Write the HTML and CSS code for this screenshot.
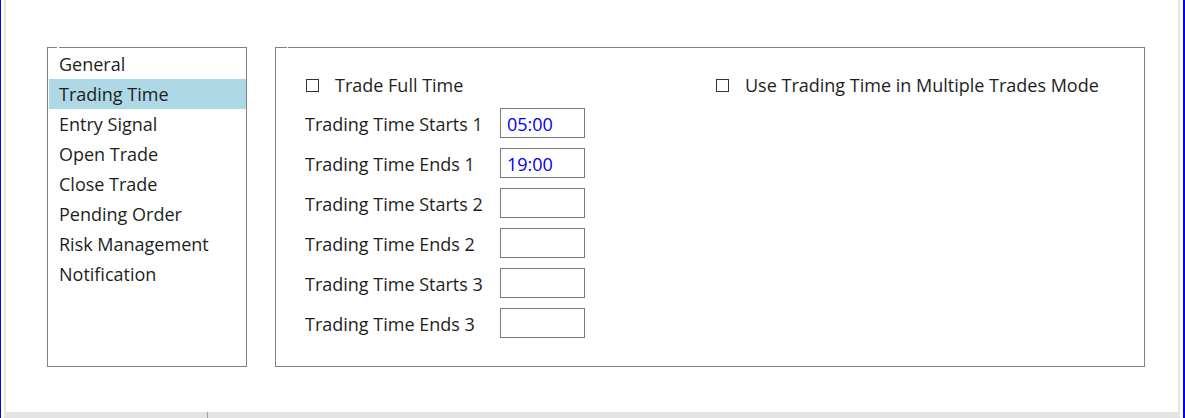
FILE: index.html
```html
<!DOCTYPE html>
<html>
  <head>
    <meta content="text/html; charset=utf-8" http-equiv="content-type">
    <title>Trading Time settings</title>
    <link rel="stylesheet" href="styles.css">
  </head>
  <body>
    <div class="window">
      <div class="client">
        <div class="content">
          <ul class="menu">
            <li>General</li>
            <li class="selected">Trading Time</li>
            <li>Entry Signal</li>
            <li>Open Trade</li>
            <li>Close Trade</li>
            <li>Pending Order</li>
            <li>Risk Management</li>
            <li>Notification</li>
          </ul>
          <form class="panel" name="myform">
            <div class="checkrow">
              <label class="check"><span class="box"></span>Trade Full Time</label>
              <label class="check"><span class="box"></span>Use Trading Time in Multiple Trades Mode</label>
            </div>
            <div class="fields">
              <span class="label">Trading Time Starts 1</span>
              <input class="time" type="text" value="05:00">
              <span class="label">Trading Time Ends 1</span>
              <input class="time" type="text" value="19:00">
              <span class="label">Trading Time Starts 2</span>
              <input class="time" type="text" value="">
              <span class="label">Trading Time Ends 2</span>
              <input class="time" type="text" value="">
              <span class="label">Trading Time Starts 3</span>
              <input class="time" type="text" value="">
              <span class="label">Trading Time Ends 3</span>
              <input class="time" type="text" value="">
            </div>
          </form>
        </div>
        <div class="statusbar">
          <span class="cell"></span>
          <span class="cell last"></span>
        </div>
      </div>
    </div>
  </body>
</html>
```

FILE: styles.css
```css
body {
    margin: 0;
    background-color: white;
    font-family: "Open Sans", Lato, sans-serif;
    font-size: 18px;
    color: #1e1e1e;
}

.window {
    box-sizing: border-box;
    width: 1185px;
    height: 418px;
    border-left: 1px solid #0000ff;
    border-right: 2px solid #0000ff;
    padding: 0 3px;
    display: flex;
}

.client {
    flex: 1;
    display: flex;
    flex-direction: column;
    border-left: 2px solid #e3e3e3;
    border-right: 2px solid #e3e3e3;
}

.content {
    flex: 1;
    display: flex;
    gap: 28px;
    padding: 47px 0 0 41px;
}

/* left list */
.menu {
    box-sizing: border-box;
    width: 200px;
    height: 320px;
    margin: 0;
    padding: 1px 0 0 1px;
    list-style: none;
    border: 1px solid #828282;
    position: relative;
}

.menu::before {
    content: "";
    position: absolute;
    left: 9px;
    top: -1px;
    width: 2px;
    height: 1px;
    background: white;
}

.menu li {
    height: 30px;
    line-height: 31px;
    padding-left: 10px;
}

.menu li.selected {
    background-color: #add8e6;
}

/* right panel */
.panel {
    box-sizing: border-box;
    width: 870px;
    height: 320px;
    margin: 0;
    padding: 22px 0 0 29px;
    border: 1px solid #828282;
    position: relative;
}

.panel::before {
    content: "";
    position: absolute;
    left: 11px;
    top: -1px;
    width: 1px;
    height: 1px;
    background: white;
}

.checkrow {
    display: flex;
    height: 30px;
    align-items: center;
    margin-bottom: 8px;
    padding-left: 1px;
    line-height: 28px;
}

.check {
    display: flex;
    align-items: center;
    gap: 16px;
    width: 410px;
}

.check:last-child {
    width: auto;
}

.box {
    box-sizing: border-box;
    width: 13px;
    height: 13px;
    border: 1.5px solid #333;
}

.fields {
    display: grid;
    grid-template-columns: 195px 85px;
    grid-auto-rows: 30px;
    row-gap: 10px;
    align-items: center;
}

.fields .label {
    padding-top: 2px;
}

input.time {
    box-sizing: border-box;
    width: 85px;
    height: 30px;
    margin: 0;
    padding: 2px 0 0 6px;
    border: 1px solid #7a7a7a;
    font-family: inherit;
    font-size: 18px;
    color: #0000ee;
    outline: none;
}

/* status bar at the bottom */
.statusbar {
    height: 6px;
    display: flex;
    background-color: #e3e3e3;
}

.statusbar .cell {
    width: 201px;
    border-right: 1px solid #a0a0a0;
}

.statusbar .cell.last {
    flex: 1;
    border-right: none;
}
```
